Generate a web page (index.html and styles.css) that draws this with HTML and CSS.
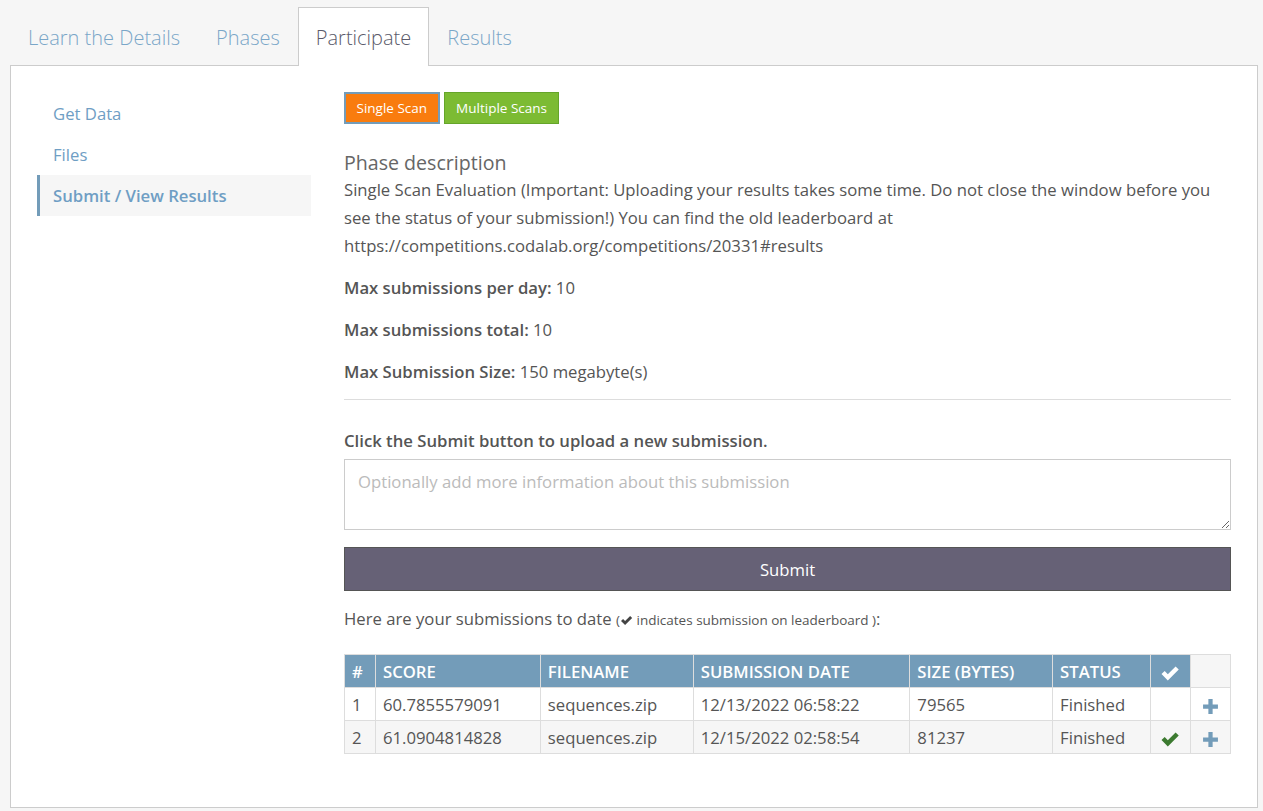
FILE: index.html
```html
<!DOCTYPE html>
<html>
<head>
<meta charset="utf-8">
<link rel="stylesheet" href="styles.css">
</head>
<body>
<div class="page">
  <ul class="tabs">
    <li class="tab">Learn the Details</li>
    <li class="tab">Phases</li>
    <li class="tab active">Participate</li>
    <li class="tab">Results</li>
  </ul>
  <div class="panel">
    <ul class="side">
      <li class="side-item">Get Data</li>
      <li class="side-item">Files</li>
      <li class="side-item active">Submit / View Results</li>
    </ul>
    <div class="main">
      <div class="phase-btns">
        <button class="pbtn single">Single Scan</button>
        <button class="pbtn multi">Multiple Scans</button>
      </div>
      <h3 class="phase-title">Phase description</h3>
      <p class="desc">Single Scan Evaluation (Important: Uploading your results takes some time. Do not close the window before you see the status of your submission!) You can find the old leaderboard at https://competitions.codalab.org/competitions/20331#results</p>
      <p class="limit"><b>Max submissions per day:</b> 10</p>
      <p class="limit"><b>Max submissions total:</b> 10</p>
      <p class="limit"><b>Max Submission Size:</b> 150 megabyte(s)</p>
      <hr class="rule">
      <p class="click"><b>Click the Submit button to upload a new submission.</b></p>
      <textarea class="notes" placeholder="Optionally add more information about this submission"></textarea>
      <button class="submit">Submit</button>
      <p class="todate">Here are your submissions to date <small>(<svg class="ico-check-sm" viewBox="0 0 16 14"><path d="M1 7.5 L3.6 5 L6.2 7.6 L12.6 1.2 L15.2 3.8 L6.2 12.8 Z" fill="#444"/></svg> indicates submission on leaderboard )</small>:</p>
      <table class="subs">
        <thead>
          <tr>
            <th class="c-num">#</th>
            <th class="c-score">SCORE</th>
            <th class="c-file">FILENAME</th>
            <th class="c-date">SUBMISSION DATE</th>
            <th class="c-size">SIZE (BYTES)</th>
            <th class="c-status">STATUS</th>
            <th class="c-lb"><svg class="ico-check" viewBox="0 0 16 14"><path d="M1 7.5 L3.6 5 L6.2 7.6 L12.6 1.2 L15.2 3.8 L6.2 12.8 Z" fill="#fff"/></svg></th>
            <th class="c-act"></th>
          </tr>
        </thead>
        <tbody>
          <tr>
            <td>1</td>
            <td>60.7855579091</td>
            <td>sequences.zip</td>
            <td>12/13/2022 06:58:22</td>
            <td>79565</td>
            <td>Finished</td>
            <td class="lb"></td>
            <td class="act"><svg class="ico-plus" viewBox="0 0 16 16"><path d="M6 1h4v5h5v4h-5v5h-4v-5h-5v-4h5z" fill="#739cb9"/></svg></td>
          </tr>
          <tr class="alt">
            <td>2</td>
            <td>61.0904814828</td>
            <td>sequences.zip</td>
            <td>12/15/2022 02:58:54</td>
            <td>81237</td>
            <td>Finished</td>
            <td class="lb"><svg class="ico-check" viewBox="0 0 16 14"><path d="M1 7.5 L3.6 5 L6.2 7.6 L12.6 1.2 L15.2 3.8 L6.2 12.8 Z" fill="#3c7a30"/></svg></td>
            <td class="act"><svg class="ico-plus" viewBox="0 0 16 16"><path d="M6 1h4v5h5v4h-5v5h-4v-5h-5v-4h5z" fill="#739cb9"/></svg></td>
          </tr>
        </tbody>
      </table>
    </div>
  </div>
</div>
</body>
</html>
```
FILE: styles.css
```css
* { box-sizing: border-box; }
html, body { margin: 0; padding: 0; }
body {
  background: #f6f6f6;
  font-family: "Open Sans", "Noto Sans", sans-serif;
  color: #555;
  font-size: 16.7px;
}
.page { padding: 7px 5px 3px 10px; }
.tabs {
  list-style: none;
  margin: 0;
  padding: 0;
  display: flex;
  height: 58px;
  position: relative;
  z-index: 1;
}
.tab {
  padding: 0 17px;
  font-size: 20px;
  color: #7aa6c8;
  line-height: 60px;
  font-weight: 300;
  border: 1px solid transparent;
  border-bottom: none;
}
.tab.active {
  background: #fff;
  border-color: #ccc;
  color: #5a5a6a;
  height: 59px;
}
.panel {
  background: #fff;
  border: 1px solid #ccc;
  display: flex;
  padding: 26px 26px 50px 26px;
  height: 743px;
}
.side {
  list-style: none;
  margin: 0;
  padding: 0;
  width: 274px;
  flex: none;
  margin-top: 1px;
}
.side-item {
  height: 41px;
  line-height: 41px;
  padding-left: 13px;
  color: #6f9ec4;
  border-left: 3px solid transparent;
}
.side-item.active {
  background: #f6f6f6;
  border-left-color: #739cb9;
  font-weight: 600;
}
.main {
  flex: 1;
  margin-left: 33px;
}
.phase-btns { display: flex; gap: 4px; }
.pbtn {
  font-family: inherit;
  font-size: 13.5px;
  color: #fff;
  height: 32px;
  padding: 0 10.5px;
  border: 2px solid;
  border-radius: 0;
}
.pbtn.single { background: #f97c0e; border-color: #739cb9; }
.pbtn.multi { background: #7cbb33; border: 1px solid #65a52a; padding: 0 11.5px; }
.phase-title {
  margin: 26px 0 0 0;
  font-size: 19.6px;
  font-weight: 400;
  color: #666;
  line-height: 26px;
}
.desc { margin: 0; line-height: 28px; }
.limit { margin: 14px 0 0 0; line-height: 28px; }
.limit b { font-weight: 600; }
.rule { border: none; border-top: 1px solid #ddd; margin: 13px 0 0 0; }
.click { margin: 27px 0 0 0; line-height: 28px; }
.click b { font-weight: 600; }
.notes {
  display: block;
  width: 100%;
  height: 71px;
  margin-top: 4px;
  border: 1px solid #ccc;
  font-family: inherit;
  font-size: 16.7px;
  padding: 10px 13px;
  color: #555;
}
.notes::placeholder { color: #bbb; }
.submit {
  display: block;
  width: 100%;
  height: 44px;
  margin-top: 17px;
  background: #666176;
  border: 1px solid #555;
  color: #fff;
  font-family: inherit;
  font-size: 16.7px;
}
.todate { margin: 14px 0 0 0; line-height: 28px; }
.todate small { font-size: 13.5px; }
.ico-check-sm { width: 13px; height: 11px; vertical-align: -1px; }
.subs {
  margin-top: 20px;
  width: 100%;
  border-collapse: collapse;
  font-size: 16.7px;
}
.subs th, .subs td {
  border: 1px solid #ddd;
  padding: 0 7px;
  text-align: left;
  height: 33px;
}
.subs th {
  background: #739cb9;
  color: #fff;
  font-weight: 600;
}
.subs th.c-act { background: #f6f6f6; }
.subs tr.alt td { background: #f6f6f6; }
.c-num { width: 31px; }
.c-score { width: 165px; }
.c-file { width: 153px; }
.c-date { width: 217px; }
.c-size { width: 143px; }
.c-status { width: 98px; }
.c-lb { width: 40px; }
.c-act { width: 40px; }
.subs .c-lb, .subs .lb, .subs .act { text-align: center; }
.ico-check { width: 20px; height: 17px; vertical-align: middle; }
.ico-plus { width: 17px; height: 17px; vertical-align: middle; }
```
